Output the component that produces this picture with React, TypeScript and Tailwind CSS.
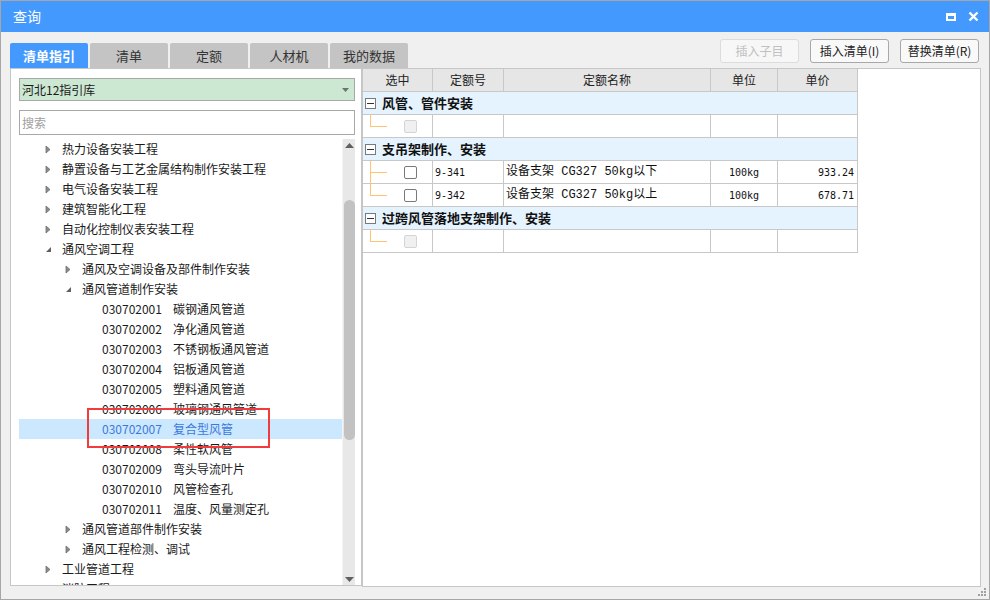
import React from "react";

type Node = { level: 0 | 1 | 2; text: string; code?: string; state?: "open" | "closed"; selected?: boolean };

const tree: Node[] = [
  { level: 0, text: "热力设备安装工程", state: "closed" },
  { level: 0, text: "静置设备与工艺金属结构制作安装工程", state: "closed" },
  { level: 0, text: "电气设备安装工程", state: "closed" },
  { level: 0, text: "建筑智能化工程", state: "closed" },
  { level: 0, text: "自动化控制仪表安装工程", state: "closed" },
  { level: 0, text: "通风空调工程", state: "open" },
  { level: 1, text: "通风及空调设备及部件制作安装", state: "closed" },
  { level: 1, text: "通风管道制作安装", state: "open" },
  { level: 2, code: "030702001", text: "碳钢通风管道" },
  { level: 2, code: "030702002", text: "净化通风管道" },
  { level: 2, code: "030702003", text: "不锈钢板通风管道" },
  { level: 2, code: "030702004", text: "铝板通风管道" },
  { level: 2, code: "030702005", text: "塑料通风管道" },
  { level: 2, code: "030702006", text: "玻璃钢通风管道" },
  { level: 2, code: "030702007", text: "复合型风管", selected: true },
  { level: 2, code: "030702008", text: "柔性软风管" },
  { level: 2, code: "030702009", text: "弯头导流叶片" },
  { level: 2, code: "030702010", text: "风管检查孔" },
  { level: 2, code: "030702011", text: "温度、风量测定孔" },
  { level: 1, text: "通风管道部件制作安装", state: "closed" },
  { level: 1, text: "通风工程检测、调试", state: "closed" },
  { level: 0, text: "工业管道工程", state: "closed" },
  { level: 0, text: "消防工程", state: "closed" },
];

type Row =
  | { kind: "group"; title: string }
  | { kind: "item"; code: string; name: string; unit: string; price: string; disabled?: boolean; last: boolean };

const rows: Row[] = [
  { kind: "group", title: "风管、管件安装" },
  { kind: "item", code: "", name: "", unit: "", price: "", disabled: true, last: true },
  { kind: "group", title: "支吊架制作、安装" },
  { kind: "item", code: "9-341", name: "设备支架 CG327 50kg以下", unit: "100kg", price: "933.24", last: false },
  { kind: "item", code: "9-342", name: "设备支架 CG327 50kg以上", unit: "100kg", price: "678.71", last: true },
  { kind: "group", title: "过跨风管落地支架制作、安装" },
  { kind: "item", code: "", name: "", unit: "", price: "", disabled: true, last: true },
];

const ui = { fontFamily: '"Noto Sans CJK SC", "Microsoft YaHei", sans-serif' };
const mono = { fontFamily: '"Liberation Mono", "Noto Sans CJK SC", monospace' };
const num = { fontFamily: '"DejaVu Sans Mono", monospace' };

function Arrow({ state }: { state?: "open" | "closed" }) {
  if (state === "closed")
    return (
      <svg width="6" height="9" viewBox="0 0 6 9">
        <path d="M1 1 L5 4.5 L1 8 Z" fill="#8a8a8a" stroke="#6e6e6e" strokeWidth="0.8" />
      </svg>
    );
  if (state === "open")
    return (
      <svg width="7" height="7" viewBox="0 0 7 7">
        <path d="M6 1 L6 6 L1 6 Z" fill="#606060" />
      </svg>
    );
  return null;
}

function TreeRow({ n }: { n: Node }) {
  const pad = n.level === 0 ? "pl-[26px]" : n.level === 1 ? "pl-[46px]" : "pl-[83px]";
  return (
    <div
      className={`h-[20px] flex items-center text-[12px] whitespace-nowrap ${pad} ${
        n.selected ? "bg-[#cce8ff] text-[#3a78dc]" : "text-[#1a1a1a]"
      }`}
    >
      {n.level < 2 && (
        <span className="w-[17px] flex items-center">
          <Arrow state={n.state} />
        </span>
      )}
      {n.code && <span className="w-[71px]">{n.code}</span>}
      <span>{n.text}</span>
    </div>
  );
}

function Checkbox({ disabled }: { disabled?: boolean }) {
  return (
    <div
      className={`w-[13px] h-[13px] rounded-[2px] border ${
        disabled ? "border-[#d4d4d4] bg-[#f0f0f0]" : "border-[#7a7a7a] bg-white"
      }`}
    />
  );
}

export default function App() {
  return (
    <div
      className="w-[990px] h-[600px] border border-[#a6a6a6] bg-[#f0f0f0] flex flex-col overflow-hidden"
      style={ui}
    >
      {/* title bar */}
      <div className="h-[31px] bg-[#4499ff] flex items-center pl-[12px] pr-[10px] text-white">
        <span className="text-[14px]">查询</span>
        <div className="ml-auto flex items-center gap-[12px]">
          <div className="w-[10px] h-[8px] border-2 border-white border-t-[3px]" />
          <svg width="11" height="11" viewBox="0 0 11 11">
            <path d="M1.5 1.5 L9.5 9.5 M9.5 1.5 L1.5 9.5" stroke="white" strokeWidth="2.4" />
          </svg>
        </div>
      </div>

      {/* tabs + buttons */}
      <div className="h-[36px] flex pl-[9px] pr-[9px]">
        <div className="flex items-end gap-[2px]">
          <div className="w-[78px] h-[25px] rounded-t-[2px] bg-[#4499ff] text-white font-bold text-[13px] flex items-center justify-center">
            清单指引
          </div>
          {["清单", "定额", "人材机", "我的数据"].map((t) => (
            <div
              key={t}
              className="w-[78px] h-[25px] rounded-t-[2px] bg-[#c4c4c4] text-[#333] text-[13px] flex items-center justify-center"
            >
              {t}
            </div>
          ))}
        </div>
        <div className="ml-auto flex items-start gap-[11px] pt-[7px] pr-[1px]">
          <button className="w-[79px] h-[24px] rounded-[3px] border border-[#dcdcdc] bg-[#f7f7f7] text-[#c0c0c0] text-[12px]">
            插入子目
          </button>
          <button className="w-[79px] h-[24px] rounded-[3px] border border-[#a8a8a8] bg-[#f9f9f9] text-[#222] text-[12px]">
            插入清单(I)
          </button>
          <button className="w-[79px] h-[24px] rounded-[3px] border border-[#a8a8a8] bg-[#f9f9f9] text-[#222] text-[12px]">
            替换清单(R)
          </button>
        </div>
      </div>

      {/* main */}
      <div className="h-[519px] flex pl-[9px] pr-[8px]">
        {/* left panel */}
        <div className="w-[352px] h-[518px] border border-[#c6c6c6] bg-white flex flex-col pt-[9px] pl-[8px] pr-[6px]">
          <div className="h-[23px] border border-[#a8a8a8] bg-[#cde8d2] flex items-center pl-[2px] pr-[5px] text-[12px] text-[#1a1a1a]">
            <span>河北12指引库</span>
            <svg className="ml-auto" width="7" height="4" viewBox="0 0 7 4">
              <path d="M0 0 L7 0 L3.5 4 Z" fill="#707070" />
            </svg>
          </div>
          <div className="mt-[9px] h-[25px] border border-[#a8a8a8] bg-white flex items-center pl-[2px] text-[12px] text-[#a0a0a0]">
            搜索
          </div>
          <div className="mt-[4px] flex-1 min-h-0 flex">
            <div className="relative flex-1 overflow-hidden">
              {tree.map((n, i) => (
                <TreeRow key={i} n={n} />
              ))}
              <div className="absolute left-[68px] top-[269px] w-[183px] h-[40px] border-2 border-[#f03c3c]" />
            </div>
            <div className="w-[13px] bg-[#e8e8e8] border-l border-[#f4f4f4] flex flex-col items-center">
              <div className="h-[12px] flex items-center justify-center">
                <svg width="9" height="5" viewBox="0 0 9 5">
                  <path d="M0 5 L9 5 L4.5 0 Z" fill="#606060" />
                </svg>
              </div>
              <div className="mt-[49px] w-[11px] h-[240px] rounded-[6px] bg-[#c2c2c2]" />
              <div className="flex-1" />
              <div className="h-[12px] flex items-center justify-center">
                <svg width="9" height="5" viewBox="0 0 9 5">
                  <path d="M0 0 L9 0 L4.5 5 Z" fill="#606060" />
                </svg>
              </div>
            </div>
          </div>
        </div>

        {/* right panel */}
        <div className="flex-1 h-[519px] border border-[#c6c6c6] bg-white">
          <div className="w-[495px] text-[12px]">
            <div className="grid grid-cols-[70px_71px_207px_67px_80px] h-[23px] bg-[#e6e6e6] border-b border-[#c8c8c8] text-[#222]">
              {["选中", "定额号", "定额名称", "单位", "单价"].map((h) => (
                <div key={h} className="border-r border-[#c8c8c8] flex items-center justify-center">
                  {h}
                </div>
              ))}
            </div>
            {rows.map((r, i) =>
              r.kind === "group" ? (
                <div
                  key={i}
                  className="h-[23px] bg-[#e5f3fe] border-b border-r border-[#c8c8c8] flex items-center pl-[2px]"
                >
                  <div className="w-[11px] h-[11px] border border-[#7a7a7a] bg-white flex items-center justify-center">
                    <div className="w-[7px] h-px bg-[#333]" />
                  </div>
                  <span className="ml-[6px] font-bold text-[13px] text-[#111]">{r.title}</span>
                </div>
              ) : (
                <div
                  key={i}
                  className="grid grid-cols-[70px_71px_207px_67px_80px] h-[23px] border-b border-[#c8c8c8] text-[#111]"
                >
                  <div className="relative border-r border-[#c8c8c8] flex items-center">
                    <div
                      className={`absolute left-[7px] top-0 w-px bg-[#ffc46e] ${r.last ? "h-[11px]" : "h-[23px]"}`}
                    />
                    <div className="absolute left-[7px] top-[11px] w-[17px] h-px bg-[#ffc46e]" />
                    <div className="ml-[41px]">
                      <Checkbox disabled={r.disabled} />
                    </div>
                  </div>
                  <div className="border-r border-[#c8c8c8] flex items-center pl-[2px] text-[10px]" style={num}>
                    {r.code}
                  </div>
                  <div
                    className="border-r border-[#c8c8c8] flex items-center pl-[2px] whitespace-nowrap text-[12px]"
                    style={mono}
                  >
                    {r.name}
                  </div>
                  <div className="border-r border-[#c8c8c8] flex items-center justify-center text-[10px]" style={num}>
                    {r.unit}
                  </div>
                  <div className="border-r border-[#c8c8c8] flex items-center justify-end pr-[3px] text-[10px]" style={num}>
                    {r.price}
                  </div>
                </div>
              )
            )}
          </div>
        </div>
      </div>

      {/* status / grip */}
      <div className="flex-1 flex justify-end items-end pr-[2px] pb-[2px]">
        <svg width="10" height="10" viewBox="0 0 10 10">
          <rect x="7" y="1" width="2" height="2" fill="#a0a0a0" />
          <rect x="4" y="4" width="2" height="2" fill="#a0a0a0" />
          <rect x="7" y="4" width="2" height="2" fill="#a0a0a0" />
          <rect x="1" y="7" width="2" height="2" fill="#a0a0a0" />
          <rect x="4" y="7" width="2" height="2" fill="#a0a0a0" />
          <rect x="7" y="7" width="2" height="2" fill="#a0a0a0" />
        </svg>
      </div>
    </div>
  );
}
